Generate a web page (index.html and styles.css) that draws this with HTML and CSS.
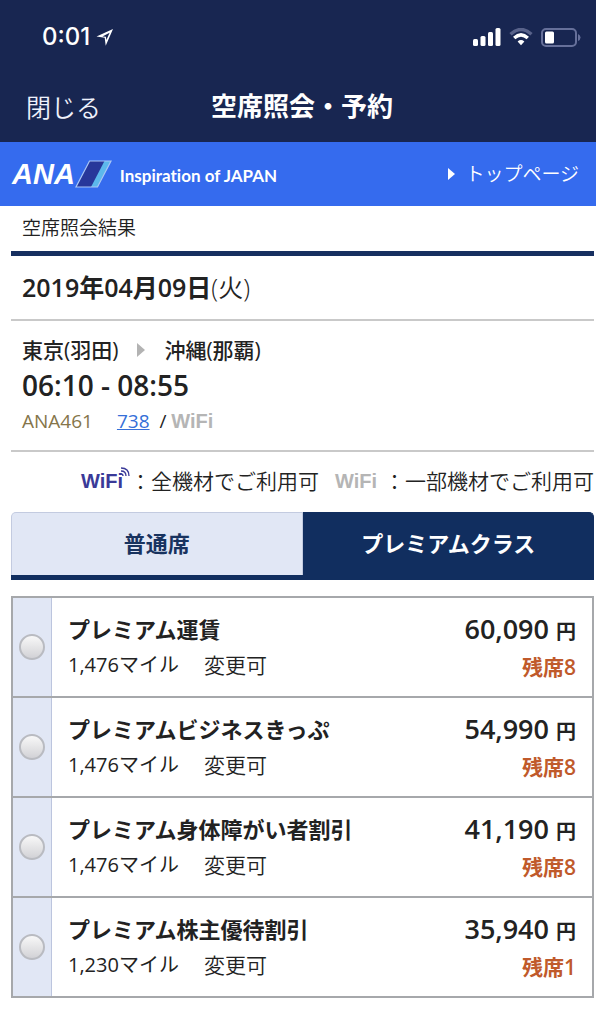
FILE: index.html
```
<!DOCTYPE html>
<html lang="ja">
<head>
  <meta charset="UTF-8">
  <meta name="viewport" content="width=device-width, initial-scale=1.0">
  <title>空席照会・予約</title>
  <link rel="stylesheet" href="styles.css">
</head>
<body>
  <!-- App header -->
  <header class="app-header">
    <div class="status-bar">
      <span class="clock">0:01</span>
      <svg class="location-icon" width="18" height="18" viewBox="0 0 18 18">
        <path d="M0.5 8.6 L17 1 L9.7 17.8 L8.7 9.8 Z M6.4 8.4 L9.9 8.7 L10.4 12 L13.6 4.8 Z" fill="#fff" fill-rule="evenodd"/>
      </svg>
      <div class="status-icons">
        <svg width="28" height="18" viewBox="0 0 28 18" fill="#fff">
          <rect x="0" y="11" width="5" height="7" rx="1.5"/>
          <rect x="7.5" y="8" width="5" height="10" rx="1.5"/>
          <rect x="15" y="4" width="5" height="14" rx="1.5"/>
          <rect x="22.5" y="0" width="5" height="18" rx="1.5"/>
        </svg>
        <svg width="24" height="18" viewBox="0 0 24 18" fill="none">
          <path d="M1.5 6.3 Q12 -3.3 22.5 6.3" stroke="#58628a" stroke-width="3.4"/>
          <path d="M5.2 10 Q12 3.8 18.8 10" stroke="#fff" stroke-width="3.4"/>
          <path d="M8.6 13.4 Q12 10.6 15.4 13.4 L12 17.2 Z" fill="#fff"/>
        </svg>
        <svg width="40" height="19" viewBox="0 0 40 19">
          <rect x="1" y="1" width="34" height="17" rx="4" fill="none" stroke="#66709a" stroke-width="2"/>
          <rect x="4" y="3.5" width="9" height="12" rx="1.5" fill="#fff"/>
          <path d="M37 6 Q39.5 7 39.5 9.5 Q39.5 12 37 13 Z" fill="#66709a"/>
        </svg>
      </div>
    </div>
    <nav class="nav-bar">
      <button type="button" class="close-button">閉じる</button>
      <h1>空席照会・予約</h1>
    </nav>
  </header>

  <!-- Brand bar -->
  <div class="brand-bar">
    <a class="brand" href="#">
      <span class="brand-name">ANA</span>
      <svg class="brand-mark" width="37" height="28" viewBox="0 0 37 28">
        <polygon points="14.5,1 36,1 22.5,27 1,27" fill="#5cb8ec"/>
        <polygon points="14.5,1 29.5,1 16,27 1,27" fill="#28379a"/>
        <polygon points="14.5,1 36,1 22.5,27 1,27" fill="none" stroke="#a9c6f5" stroke-width="1.2"/>
      </svg>
      <span class="brand-slogan">Inspiration of JAPAN</span>
    </a>
    <a class="top-link" href="#">トップページ</a>
  </div>

  <main>
    <h2 class="page-title">空席照会結果</h2>

    <!-- Flight -->
    <p class="date"><strong>2019年04月09日</strong>(火)</p>
    <section class="flight">
      <div class="route">
        <span>東京(羽田)</span>
        <span class="route-arrow"></span>
        <span>沖縄(那覇)</span>
      </div>
      <div class="times">06:10 - 08:55</div>
      <div class="flight-info">
        <span class="flight-number">ANA461</span>
        <span><a href="#">738</a> &nbsp;/ <span class="wifi">WiFi</span></span>
      </div>
    </section>

    <!-- WiFi legend -->
    <div class="legend">
      <span class="wifi wifi-all">WiFi</span>
      <svg class="wifi-waves" width="10" height="10" viewBox="0 0 10 10" fill="none" stroke="#3a3a98">
        <path d="M1 1 Q9 1 9 9" stroke-width="1.3"/>
        <path d="M1 4 Q6 4 6 9" stroke-width="1.3"/>
        <path d="M1 7 Q3 7 3 9" stroke-width="1.3"/>
      </svg>
      <span>：全機材でご利用可</span>
      <span class="wifi wifi-some">WiFi</span>
      <span>：一部機材でご利用可</span>
    </div>

    <!-- Seat class -->
    <div class="tabs" role="tablist">
      <button type="button" class="tab" role="tab" aria-selected="false">普通席</button>
      <button type="button" class="tab active" role="tab" aria-selected="true">プレミアムクラス</button>
    </div>

    <!-- Fares -->
    <form class="fares">
      <label class="fare">
        <span class="fare-select"><input type="radio" name="fare"></span>
        <span class="fare-detail">
          <span class="fare-name">プレミアム運賃</span>
          <span class="fare-terms"><span class="miles">1,476マイル</span><span>変更可</span></span>
        </span>
        <span class="fare-price">
          <span class="price">60,090 <small>円</small></span>
          <span class="seats">残席8</span>
        </span>
      </label>
      <label class="fare">
        <span class="fare-select"><input type="radio" name="fare"></span>
        <span class="fare-detail">
          <span class="fare-name">プレミアムビジネスきっぷ</span>
          <span class="fare-terms"><span class="miles">1,476マイル</span><span>変更可</span></span>
        </span>
        <span class="fare-price">
          <span class="price">54,990 <small>円</small></span>
          <span class="seats">残席8</span>
        </span>
      </label>
      <label class="fare">
        <span class="fare-select"><input type="radio" name="fare"></span>
        <span class="fare-detail">
          <span class="fare-name">プレミアム身体障がい者割引</span>
          <span class="fare-terms"><span class="miles">1,476マイル</span><span>変更可</span></span>
        </span>
        <span class="fare-price">
          <span class="price">41,190 <small>円</small></span>
          <span class="seats">残席8</span>
        </span>
      </label>
      <label class="fare">
        <span class="fare-select"><input type="radio" name="fare"></span>
        <span class="fare-detail">
          <span class="fare-name">プレミアム株主優待割引</span>
          <span class="fare-terms"><span class="miles">1,230マイル</span><span>変更可</span></span>
        </span>
        <span class="fare-price">
          <span class="price">35,940 <small>円</small></span>
          <span class="seats">残席1</span>
        </span>
      </label>
    </form>
  </main>
</body>
</html>
```
FILE: styles.css
```
/* General */
* {
  box-sizing: border-box;
}

body {
  margin: 0;
  background: #fff;
  color: #222;
  font-family: "Open Sans", "Noto Sans CJK JP", sans-serif;
  font-size: 21px;
  line-height: 30px;
}

h1,
h2,
p {
  margin: 0;
}

button {
  font-family: inherit;
  border: none;
  padding: 0;
  cursor: pointer;
}

/* App header */
.app-header {
  background: #182651;
  color: #fff;
  padding-top: 18px;
}

.status-bar {
  display: flex;
  align-items: center;
  height: 38px;
  padding: 0 15px 0 42px;
}

.clock {
  font-family: Inter, sans-serif;
  font-size: 24px;
  font-weight: 500;
}

.location-icon {
  margin-left: 6px;
}

.status-icons {
  display: flex;
  align-items: center;
  gap: 8px;
  margin-left: auto;
}

.nav-bar {
  display: grid;
  grid-template-columns: 1fr auto 1fr;
  align-items: center;
  height: 86px;
  padding: 14px 18px 0 26px;
}

.close-button {
  justify-self: start;
  background: none;
  color: #eef1fb;
  font-size: 25px;
  font-weight: 350;
}

.nav-bar h1 {
  font-size: 26px;
  font-weight: 700;
}

/* Brand bar */
.brand-bar {
  display: flex;
  justify-content: space-between;
  align-items: center;
  height: 64px;
  padding: 0 17px 0 12px;
  background: #356bee;
}

.brand {
  display: flex;
  align-items: center;
  color: #fff;
  text-decoration: none;
}

.brand-name {
  font-family: "Liberation Sans", sans-serif;
  font-size: 29px;
  font-weight: 700;
  font-style: italic;
}

.brand-slogan {
  padding-top: 4px;
  margin-left: 8px;
  font-family: Lato, sans-serif;
  font-size: 17px;
  font-weight: 700;
  font-variant-ligatures: none;
}

.top-link {
  display: flex;
  align-items: center;
  gap: 10px;
  color: #fff;
  font-size: 19px;
  font-weight: 350;
  text-decoration: none;
}

.top-link::before {
  content: "";
  border-left: 7px solid #fff;
  border-top: 6px solid transparent;
  border-bottom: 6px solid transparent;
}

/* Flight */
main {
  padding: 0 2px 27px 11px;
}

.page-title {
  padding: 7px 11px 8px;
  border-bottom: 5px solid #162f60;
  font-size: 19px;
  font-weight: 350;
}

.date {
  padding: 16px 11px 17px;
  border-bottom: 2px solid #c9c9c9;
  font-size: 25px;
  font-weight: 350;
}

.date strong {
  font-weight: 600;
}

.flight {
  padding: 11px 11px 10px;
  border-bottom: 2px solid #c9c9c9;
}

.route {
  display: flex;
  align-items: center;
  gap: 19px;
  height: 36px;
  font-weight: 500;
}

.route-arrow {
  border-left: 8px solid #b3b3b3;
  border-top: 7px solid transparent;
  border-bottom: 7px solid transparent;
}

.times {
  line-height: 34px;
  font-size: 28px;
  font-weight: 600;
}

.flight-info {
  display: flex;
  gap: 24px;
  height: 38px;
  line-height: 38px;
  font-size: 19px;
}

.flight-number {
  color: #85754a;
}

.flight-info a {
  color: #356fd8;
}

.wifi {
  color: #b5b5b5;
  font-family: "Liberation Sans", sans-serif;
  font-size: 20px;
  font-weight: 700;
}

/* WiFi legend */
.legend {
  display: flex;
  justify-content: flex-end;
  align-items: center;
  height: 60px;
  padding-bottom: 2px;
  font-weight: 350;
  white-space: nowrap;
}

.wifi-all {
  color: #3a3a98;
}

.wifi-waves {
  align-self: flex-start;
  margin: 15px 0 0 -3px;
}

.wifi-some {
  margin: 0 7px 0 16px;
}

/* Seat class */
.tabs {
  display: grid;
  grid-template-columns: 1fr 1fr;
  border-bottom: 5px solid #112e5f;
}

.tab {
  height: 63px;
  padding-bottom: 5px;
  border: 1px solid #c3cbe0;
  border-bottom: none;
  border-radius: 5px 0 0 0;
  background: #e1e7f5;
  color: #18335f;
  font-size: 22px;
  font-weight: 700;
}

.tab.active {
  border-color: #112e5f;
  border-radius: 0 5px 0 0;
  background: #112e5f;
  color: #fff;
}

/* Fares */
.fares {
  margin-top: 16px;
  border: 2px solid #a6a8ab;
  border-top: none;
}

.fare {
  display: flex;
  height: 100px;
  border-top: 2px solid #a6a8ab;
  cursor: pointer;
}

.fare-select {
  display: flex;
  align-items: center;
  justify-content: center;
  width: 39px;
  border-right: 1px solid #bcc5de;
  background: #e1e7f5;
}

.fare-select input {
  appearance: none;
  width: 26px;
  height: 26px;
  margin: 0;
  border: 2px solid #b9bbc1;
  border-radius: 50%;
  background: linear-gradient(#f8f8f8, #d2d2d6);
}

.fare-select input:checked {
  border-color: #112e5f;
}

.fare-detail,
.fare-price {
  display: flex;
  flex-direction: column;
  padding-top: 13px;
  line-height: 36px;
}

.fare-detail {
  flex: 1;
  padding-left: 16px;
}

.fare-price {
  align-items: flex-end;
  padding-right: 16px;
}

.fare-name {
  font-size: 22px;
  font-weight: 700;
}

.fare-terms {
  display: flex;
  gap: 25px;
  font-weight: 350;
}

.miles {
  font-size: 20px;
  font-weight: 400;
}

.price {
  font-size: 27px;
  font-weight: 600;
}

.price small {
  font-size: 20px;
}

.seats {
  color: #c05a2b;
  font-size: 21px;
  font-weight: 600;
  line-height: 34px;
}
```
